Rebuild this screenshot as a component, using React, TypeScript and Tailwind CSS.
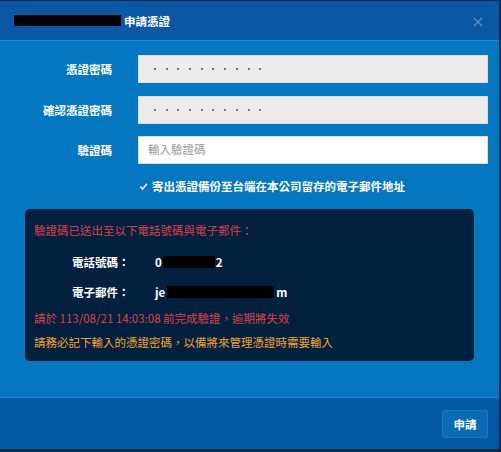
import React from "react";

const font = { fontFamily: '"Noto Sans CJK TC", "Noto Sans", sans-serif' };

function Dots() {
  return (
    <div className="flex items-center gap-[9.7px] pl-[15px]">
      {Array.from({ length: 10 }).map((_, i) => (
        <span key={i} className="block w-[2px] h-[2px] rounded-full bg-[#555555]" />
      ))}
    </div>
  );
}

function Row({ label, children }: { label: string; children: React.ReactNode }) {
  return (
    <div className="flex items-center">
      <div className="w-[112px] text-right text-[11.5px] font-bold text-white leading-[16px]">{label}</div>
      <div className="ml-[26px] w-[350px] h-[28px]">{children}</div>
    </div>
  );
}

export default function App() {
  return (
    <div
      style={font}
      className="w-[501px] h-[452px] flex flex-col border-r-2 border-b-[3px] border-t border-[#0d2c4c] bg-[#0577c0] overflow-hidden"
    >
      {/* header */}
      <div className="h-[40px] shrink-0 bg-[#0a58a4] border-b border-[#2486cf] flex items-center pl-[14px] pr-[16px]">
        <div className="flex items-center text-white font-bold text-[11.5px] leading-[16px]">
          <span className="inline-block w-[107px] h-[11px] bg-black mr-[3px]" />
          <span>申請憑證</span>
        </div>
        <div className="ml-auto mt-[2px]">
          <svg width="10" height="10" viewBox="0 0 10 10">
            <path d="M1 1 L9 9 M9 1 L1 9" stroke="#5f91c4" strokeWidth="1.2" />
          </svg>
        </div>
      </div>

      {/* body */}
      <div className="flex-1 flex flex-col pt-[14px]">
        <div className="flex flex-col gap-[12.5px]">
          <Row label="憑證密碼">
            <div className="w-full h-full bg-[#ececec] border border-[#dcdcdc] flex items-center">
              <Dots />
            </div>
          </Row>
          <Row label="確認憑證密碼">
            <div className="w-full h-full bg-[#ececec] border border-[#dcdcdc] flex items-center">
              <Dots />
            </div>
          </Row>
          <Row label="驗證碼">
            <div className="w-full h-full bg-white border border-[#dcdcdc] flex items-center pl-[9px] text-[11.5px] text-[#9a9a9a]">
              輸入驗證碼
            </div>
          </Row>
        </div>

        <div className="flex items-center mt-[14px] ml-[139px] h-[16px]">
          <svg width="9" height="9" viewBox="0 0 10 10" className="mr-[4px]">
            <path d="M1.5 5.2 L4 7.8 L8.8 2" stroke="#e8f2ff" strokeWidth="1.8" fill="none" />
          </svg>
          <span className="text-[11.5px] font-semibold text-white leading-[16px]">
            寄出憑證備份至台端在本公司留存的電子郵件地址
          </span>
        </div>

        <div className="mt-[15px] ml-[25px] w-[449px] h-[152px] rounded-[5px] bg-[#03213f] pt-[13px] pl-[9px] text-[11.5px] leading-[16px]">
          <div className="text-[#dc4048]">驗證碼已送出至以下電話號碼與電子郵件：</div>
          <div className="flex mt-[16px] h-[16px] items-center text-white font-bold">
            <span className="ml-[38px] w-[83px]">電話號碼：</span>
            <span>0</span>
            <span className="inline-block w-[52px] h-[12px] bg-black mx-[1px]" />
            <span>2</span>
          </div>
          <div className="flex mt-[14px] h-[16px] items-center text-white font-bold">
            <span className="ml-[38px] w-[83px]">電子郵件：</span>
            <span>je</span>
            <span className="inline-block w-[107px] h-[12px] bg-black mx-[2px]" />
            <span>m</span>
          </div>
          <div className="mt-[10px] text-[#dc4048]">請於 113/08/21 14:03:08 前完成驗證，逾期將失效</div>
          <div className="mt-[8px] text-[#f0a234]">請務必記下輸入的憑證密碼，以備將來管理憑證時需要輸入</div>
        </div>
      </div>

      {/* footer */}
      <div className="h-[52px] shrink-0 bg-[#0059a2] border-t border-[#2486cf] flex items-center justify-end pr-[11px]">
        <button className="w-[46px] h-[28px] rounded-[2px] bg-[#0b6ab6] border border-[#1a78c0] text-white font-bold text-[11.5px] leading-[16px]">
          申請
        </button>
      </div>
    </div>
  );
}
